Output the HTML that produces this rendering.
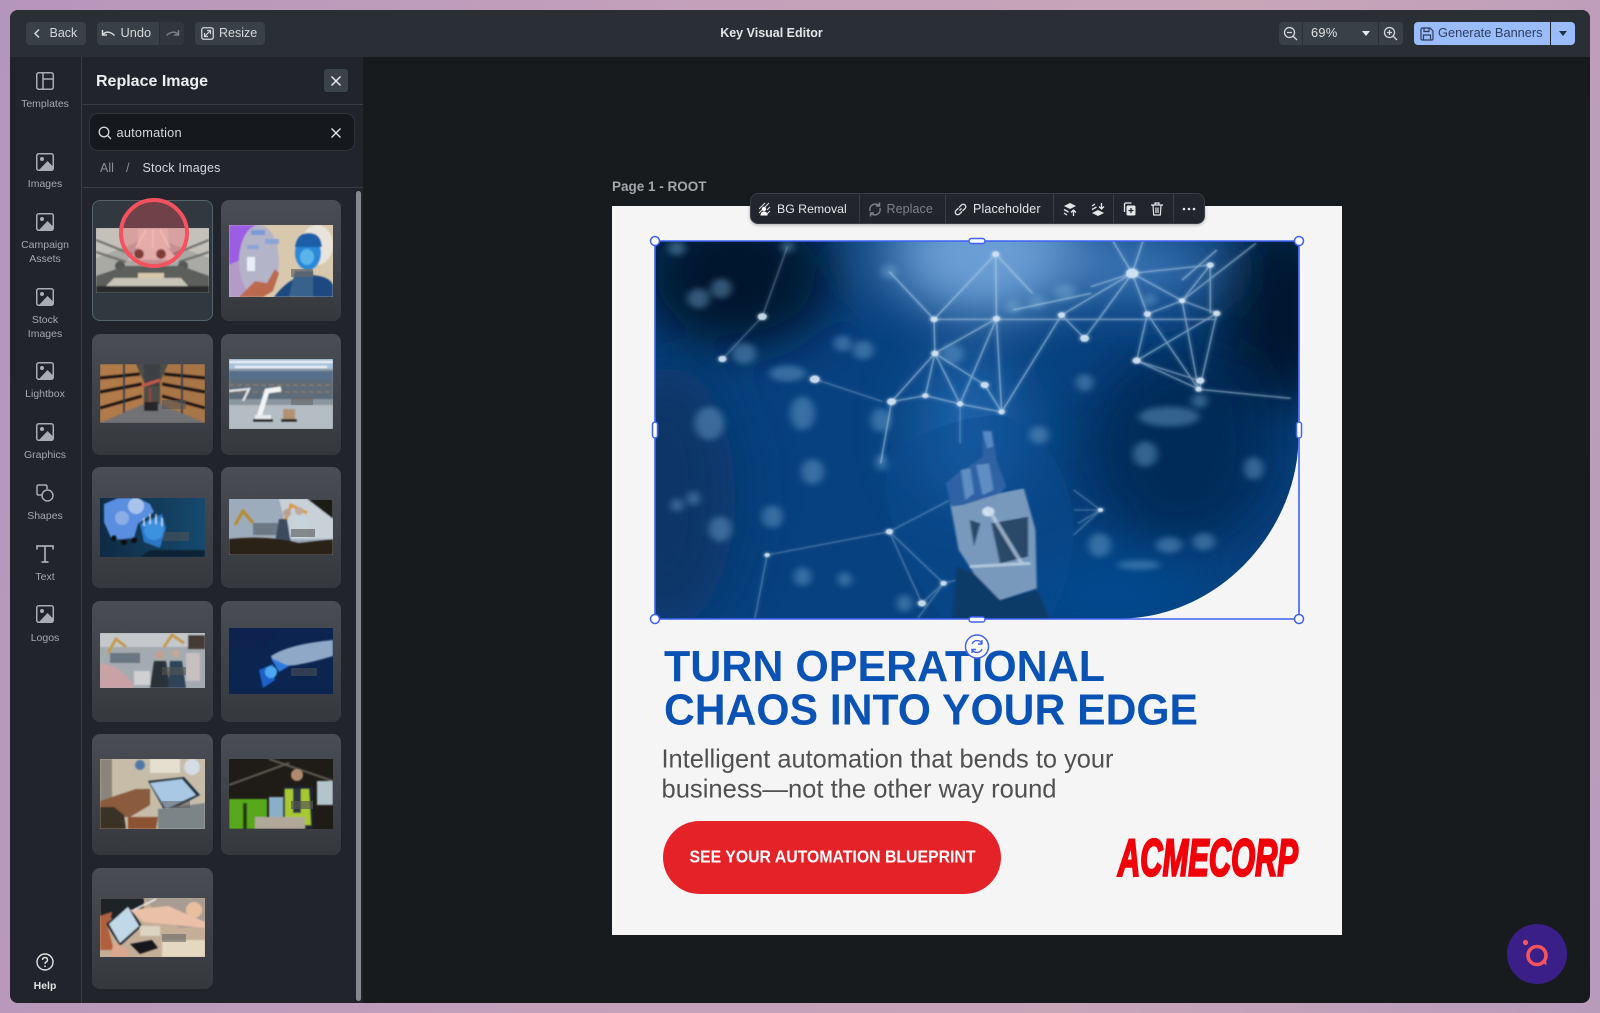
<!DOCTYPE html>
<html><head><meta charset="utf-8"><title>Key Visual Editor</title>
<style>
*{box-sizing:border-box}
html,body{margin:0;padding:0;width:1600px;height:1013px;overflow:hidden}
body{background:linear-gradient(100deg,#b596bb 0%,#c4a0bb 40%,#c9a5b8 70%,#b89bbb 100%);font-family:"Liberation Sans",sans-serif;position:relative}
.a{position:absolute}
.t{position:absolute;white-space:nowrap;line-height:1}
#win{position:absolute;left:10px;top:10px;width:1580px;height:993px;background:#171b1e;border-radius:8px;overflow:hidden}
.btn{position:absolute;top:22px;height:23px;background:#3a4047}
.lab{position:absolute;left:10px;width:70px;text-align:center;font-size:10.500px;color:#a5a9ae;line-height:14px}
.card{position:absolute;width:121px;height:121px;border-radius:8px;background:linear-gradient(#4a4d54,#35383d)}
.thumb{position:absolute;display:block}
.ic{position:absolute;display:block}
</style></head><body>
<svg width="0" height="0" style="position:absolute">
<defs>
<symbol id="img" viewBox="0 0 18 18"><rect x=".75" y=".75" width="16.500" height="16.500" rx="2" fill="none" stroke="#a9adb2" stroke-width="1.500"/><circle cx="6" cy="6" r="2" fill="#a9adb2"/><path d="M3 17 L11.500 8 L17 13.500 V17Z" fill="#a9adb2"/></symbol>
<filter id="b1"><feGaussianBlur stdDeviation=".7"/></filter>
<filter id="b3" filterUnits="userSpaceOnUse" x="-100" y="-100" width="1800" height="1400"><feGaussianBlur stdDeviation="2.500"/></filter>
<filter id="b6" filterUnits="userSpaceOnUse" x="-100" y="-100" width="1800" height="1400"><feGaussianBlur stdDeviation="9"/></filter>
<filter id="b60" filterUnits="userSpaceOnUse" x="-400" y="-400" width="2400" height="2000"><feGaussianBlur stdDeviation="70"/></filter>
<filter id="glow" filterUnits="userSpaceOnUse" x="-100" y="-100" width="1800" height="1400"><feGaussianBlur in="SourceGraphic" stdDeviation="5" result="g"/><feGaussianBlur in="SourceGraphic" stdDeviation="1.200" result="c"/><feMerge><feMergeNode in="g"/><feMergeNode in="c"/></feMerge></filter>
<clipPath id="shape"><path d="M35 32H1518V640C1510 900 1340 1166 1100 1166H35Z"/></clipPath>
</defs>
</svg>

<div id="win"></div>
<!-- top bar -->
<div class="a" style="left:10px;top:10px;width:1580px;height:47px;background:#2a2f35;border-radius:8px 8px 0 0"></div>
<!-- sidebar + panel -->
<div class="a" style="left:10px;top:57px;width:353px;height:946px;background:#21252b;border-radius:0 0 0 8px"></div>
<div class="a" style="left:81px;top:57px;width:1px;height:946px;background:#3a3e44"></div>

<div class="btn" style="left:25.500px;width:60px;border-radius:4px"></div>
<svg class="ic" style="left:31px;top:27px" width="12" height="13" viewBox="0 0 12 13"><path d="M8 2.500L4 6.500L8 10.500" fill="none" stroke="#d5d8db" stroke-width="1.500"/></svg>
<div class="t" style="left:49.500px;top:26.500px;font-size:12.500px;color:#d5d8db">Back</div>
<div class="btn" style="left:97px;width:62px;border-radius:4px 0 0 4px"></div>
<div class="btn" style="left:160px;width:24px;border-radius:0 4px 4px 0;background:#32373d"></div>
<svg class="ic" style="left:101px;top:27px" width="15" height="13" viewBox="0 0 15 13"><path d="M1.500 3V8H6M2 7.500C4.500 4.500 9 4 13.500 8.500" fill="none" stroke="#d5d8db" stroke-width="1.500"/></svg>
<div class="t" style="left:120.500px;top:26.500px;font-size:12.800px;color:#d5d8db">Undo</div>
<svg class="ic" style="left:165px;top:27px" width="15" height="13" viewBox="0 0 15 13"><path d="M13.500 3V8H9M13 7.500C10.500 4.500 6 4 1.500 8.500" fill="none" stroke="#7c8186" stroke-width="1.500"/></svg>
<div class="btn" style="left:195px;width:70px;border-radius:4px"></div>
<svg class="ic" style="left:201px;top:27px" width="13" height="13" viewBox="0 0 13 13"><rect x=".75" y=".75" width="11.500" height="11.500" rx="2" fill="none" stroke="#d5d8db" stroke-width="1.300"/><path d="M4 9L9 4M6 3.500H9.500V7M3.500 6V9.500H7" fill="none" stroke="#d5d8db" stroke-width="1.200"/></svg>
<div class="t" style="left:219px;top:26.500px;font-size:12.500px;color:#d5d8db">Resize</div>
<div class="t" style="left:671.500px;width:200px;text-align:center;top:27px;font-size:12.500px;font-weight:bold;color:#e4e6e8">Key Visual Editor</div>

<!-- zoom -->
<div class="btn" style="left:1279px;width:23px;border-radius:4px 0 0 4px"></div>
<div class="btn" style="left:1303px;width:75px"></div>
<div class="btn" style="left:1379px;width:24px;border-radius:0 4px 4px 0"></div>
<svg class="ic" style="left:1283px;top:26px" width="15" height="15" viewBox="0 0 15 15"><circle cx="6.500" cy="6.500" r="5" fill="none" stroke="#d5d8db" stroke-width="1.300"/><path d="M10 10L14 14M4 6.500H9" stroke="#d5d8db" stroke-width="1.300"/></svg>
<div class="t" style="left:1311px;top:26.500px;font-size:12.800px;color:#e0e2e4;letter-spacing:.3px">69%</div>
<svg class="ic" style="left:1361px;top:30px" width="10" height="7"><path d="M1 1H9L5 6Z" fill="#e8eaec"/></svg>
<svg class="ic" style="left:1383px;top:26px" width="15" height="15" viewBox="0 0 15 15"><circle cx="6.500" cy="6.500" r="5" fill="none" stroke="#d5d8db" stroke-width="1.300"/><path d="M10 10L14 14M4 6.500H9M6.500 4V9" stroke="#d5d8db" stroke-width="1.300"/></svg>
<!-- generate -->
<div class="btn" style="left:1414px;width:136px;border-radius:4px 0 0 4px;background:#9bbcfb"></div>
<div class="a" style="left:1550px;top:22px;width:1px;height:23px;background:#25282c"></div>
<div class="btn" style="left:1551px;width:24px;border-radius:0 4px 4px 0;background:#9bbcfb"></div>
<svg class="ic" style="left:1420px;top:27px" width="14" height="14" viewBox="0 0 14 14"><path d="M1 2.500Q1 1 2.500 1H10L13 4V11.500Q13 13 11.500 13H2.500Q1 13 1 11.500Z M4 1V4.500H9V1M3.500 13V8H10.500V13" fill="none" stroke="#2c3d5e" stroke-width="1.200"/></svg>
<div class="t" style="left:1438px;top:26.500px;font-size:12.800px;color:#2f4060">Generate Banners</div>
<svg class="ic" style="left:1558px;top:30px" width="10" height="7"><path d="M1 1H9L5 6Z" fill="#22304a"/></svg>

<!-- sidebar -->
<svg class="ic" style="left:36px;top:72px" width="18" height="18" viewBox="0 0 18 18"><rect x=".75" y=".75" width="16.500" height="16.500" rx="2" fill="none" stroke="#a9adb2" stroke-width="1.500"/><path d="M7 1V17M7 7H17" stroke="#a9adb2" stroke-width="1.500"/></svg>
<div class="lab" style="top:97px">Templates</div>
<svg class="ic" style="left:36px;top:152.500px" width="18" height="18"><use href="#img"/></svg>
<div class="lab" style="top:177px">Images</div>
<svg class="ic" style="left:36px;top:213px" width="18" height="18"><use href="#img"/></svg>
<div class="lab" style="top:237.500px">Campaign<br>Assets</div>
<svg class="ic" style="left:36px;top:288px" width="18" height="18"><use href="#img"/></svg>
<div class="lab" style="top:312.500px">Stock<br>Images</div>
<svg class="ic" style="left:36px;top:362px" width="18" height="18"><use href="#img"/></svg>
<div class="lab" style="top:387px">Lightbox</div>
<svg class="ic" style="left:36px;top:423px" width="18" height="18"><use href="#img"/></svg>
<div class="lab" style="top:448px">Graphics</div>
<svg class="ic" style="left:36px;top:484px" width="18" height="18" viewBox="0 0 18 18"><path d="M6 11H2.500Q1 11 1 9.500V2.500Q1 1 2.500 1H9.500Q11 1 11 2.500V5" fill="none" stroke="#a9adb2" stroke-width="1.500"/><circle cx="11.500" cy="11.500" r="5.500" fill="none" stroke="#a9adb2" stroke-width="1.500"/></svg>
<div class="lab" style="top:509px">Shapes</div>
<svg class="ic" style="left:36px;top:545px" width="18" height="18" viewBox="0 0 18 18"><path d="M1 4.500V1H17V4.500M9 1V17M5.500 17H12.500" fill="none" stroke="#a9adb2" stroke-width="1.700"/></svg>
<div class="lab" style="top:569.500px">Text</div>
<svg class="ic" style="left:36px;top:605px" width="18" height="18"><use href="#img"/></svg>
<div class="lab" style="top:630.500px">Logos</div>
<svg class="ic" style="left:36px;top:953px" width="18" height="18" viewBox="0 0 18 18"><circle cx="9" cy="9" r="8" fill="none" stroke="#e0e2e4" stroke-width="1.400"/><path d="M6.500 7Q6.500 4.500 9 4.500T11.500 7Q11.500 8.500 9.800 9.200Q9 9.600 9 11" fill="none" stroke="#e0e2e4" stroke-width="1.400"/><circle cx="9" cy="13.300" r=".9" fill="#e0e2e4"/></svg>
<div class="lab" style="top:979px;color:#e0e2e4;font-weight:bold">Help</div>

<!-- panel -->
<div class="t" style="left:96px;top:74px;font-size:16px;font-weight:bold;color:#eceef0">Replace Image</div>
<div class="a" style="left:324px;top:69px;width:24px;height:23px;border-radius:3px;background:#3b424a"></div>
<svg class="ic" style="left:330px;top:75px" width="12" height="12"><path d="M1.500 1.500L10.500 10.500M10.500 1.500L1.500 10.500" stroke="#e8eaec" stroke-width="1.500"/></svg>
<div class="a" style="left:82px;top:104px;width:281px;height:1px;background:#3a3e44"></div>
<div class="a" style="left:88.500px;top:113px;width:266.500px;height:38px;border-radius:9px;background:#15181c;border:1px solid #2f343a"></div>
<svg class="ic" style="left:98px;top:126px" width="14" height="14" viewBox="0 0 14 14"><circle cx="6" cy="6" r="4.800" fill="none" stroke="#d5d8db" stroke-width="1.300"/><path d="M9.500 9.500L13 13" stroke="#d5d8db" stroke-width="1.300"/></svg>
<div class="t" style="left:116.500px;top:126.500px;font-size:12.800px;color:#d5d8db;letter-spacing:.2px">automation</div>
<svg class="ic" style="left:330px;top:127px" width="12" height="12"><path d="M1.500 1.500L10.500 10.500M10.500 1.500L1.500 10.500" stroke="#e0e2e4" stroke-width="1.400"/></svg>
<div class="t" style="left:100px;top:162px;font-size:12.500px;color:#8b8f94">All</div>
<div class="t" style="left:126px;top:162px;font-size:12.500px;color:#8b8f94">/</div>
<div class="t" style="left:142.500px;top:162px;font-size:12.500px;color:#d5d8db;letter-spacing:.2px">Stock Images</div>
<div class="a" style="left:82px;top:187px;width:281px;height:1px;background:#3a3e44"></div>
<div class="a" style="left:356px;top:191px;width:5px;height:810px;border-radius:3px;background:#85888c"></div>

<!-- cards -->
<div class="card" style="left:92px;top:200px;background:#323840;border:1.500px solid #56626c"></div>
<div class="card" style="left:221px;top:200px;width:120px"></div>
<div class="card" style="left:92px;top:334px"></div><div class="card" style="left:221px;top:334px;width:120px"></div>
<div class="card" style="left:92px;top:467px"></div><div class="card" style="left:221px;top:467px;width:120px"></div>
<div class="card" style="left:92px;top:601px"></div><div class="card" style="left:221px;top:601px;width:120px"></div>
<div class="card" style="left:92px;top:734px"></div><div class="card" style="left:221px;top:734px;width:120px"></div>
<div class="card" style="left:92px;top:868px"></div>

<!-- r1c1 -->
<svg class="thumb" style="left:96px;top:228px" width="113" height="65" viewBox="0 0 113 65">
<rect width="113" height="65" fill="#a9a9a5"/>
<g filter="url(#b1)"><path d="M0 0H113V30L70 14H42L0 30Z" fill="#c4c1bb"/>
<path d="M0 12L40 28M113 12L73 28M0 24L30 34M113 24L83 34" stroke="#75756f" stroke-width="2.500"/>
<circle cx="24" cy="38" r="5" fill="#555856"/><circle cx="87" cy="38" r="5" fill="#555856"/>
<path d="M0 48L30 38H85L113 48V65H0Z" fill="#5d5e5b"/>
<path d="M18 50H85L92 58H10Z" fill="#c7c3b6"/><rect x="42" y="45" width="26" height="5" fill="#d6c8a8"/>
<rect x="0" y="58" width="113" height="7" fill="#2a2b2a"/>
<path d="M42 0H72V20L82 32H32L42 20Z" fill="#d8cfc7"/>
<path d="M50 2L40 20M64 2L74 20M57 2V20" stroke="#f0e6de" stroke-width="1.500"/>
<ellipse cx="43" cy="26" rx="5" ry="5" fill="#4a3028"/><ellipse cx="65" cy="26" rx="5" ry="5" fill="#4a3028"/></g>
</svg>
<!-- r1c2 -->
<svg class="thumb" style="left:229px;top:225px" width="104" height="72" viewBox="0 0 104 72">
<rect width="104" height="72" fill="#d8c8ae"/>
<g filter="url(#b1)"><path d="M0 0H28L14 34L0 40Z" fill="#9c5ce4"/><path d="M0 40L14 34L18 72H0Z" fill="#b49ac8"/><ellipse cx="30" cy="36" rx="20" ry="36" fill="#b4b4c8"/>
<ellipse cx="88" cy="20" rx="16" ry="20" fill="#e8e4dc"/>
<path d="M45 72Q60 52 78 50Q100 50 104 60V72Z" fill="#1f4a80"/><path d="M60 72L66 46H84V72Z" fill="#38628c"/>
<ellipse cx="79" cy="28" rx="13" ry="17" fill="#2a88d8"/><path d="M66 22Q68 8 80 8Q92 8 93 22Z" fill="#1b5ea8"/><ellipse cx="78" cy="32" rx="7" ry="8" fill="#5ab4ea"/>
<rect x="22" y="5" width="14" height="5" fill="#7a9ad8"/><rect x="36" y="14" width="14" height="5" fill="#8aa4d8"/><rect x="18" y="20" width="12" height="4" fill="#8aa4d8"/>
<path d="M10 72L26 56L38 58L46 44L50 48L44 66L34 72Z" fill="#bc6a50"/><path d="M18 32h8v14h-8z" fill="#e8ecf4"/></g>
<rect x="62" y="44" width="22" height="8" fill="#666" opacity=".7"/>
</svg>
<!-- r2c1 -->
<svg class="thumb" style="left:100px;top:364px" width="105" height="59" viewBox="0 0 105 59">
<rect width="105" height="59" fill="#4c4c4a"/>
<g filter="url(#b1)"><path d="M0 0H36L44 18V40L0 59Z" fill="#b07a48"/><path d="M105 0H68L60 18V40L105 59Z" fill="#a87446"/>
<path d="M0 14L40 10M0 28L42 20M0 44L42 32M105 14L64 10M105 28L62 20M105 44L62 32" stroke="#1c1612" stroke-width="3.500"/><path d="M24 0V50M82 0V50" stroke="#22384e" stroke-width="2"/>
<path d="M0 59L44 40H60L105 59Z" fill="#6f7274"/><rect x="44" y="0" width="16" height="22" fill="#3e4044"/>
<rect x="44" y="38" width="14" height="9" fill="#25282a"/><path d="M42 22L60 16" stroke="#c8584a" stroke-width="3"/><path d="M50 38V24" stroke="#8a4a40" stroke-width="3"/></g>
<rect x="62" y="36" width="24" height="9" fill="#555" opacity=".6"/>
</svg>
<!-- r2c2 -->
<svg class="thumb" style="left:229px;top:359px" width="104" height="70" viewBox="0 0 104 70">
<rect width="104" height="70" fill="#8a96a0"/>
<g filter="url(#b1)"><rect width="104" height="10" fill="#a8c4dc"/><path d="M0 3H104M6 8H98" stroke="#f0f4f8" stroke-width="2"/>
<rect y="12" width="104" height="8" fill="#56708c"/><rect y="20" width="104" height="20" fill="#5c6c7a"/>
<path d="M0 26H104M0 33H104" stroke="#8c7a62" stroke-width="1.500" stroke-dasharray="5 3"/>
<rect y="46" width="104" height="24" fill="#b4bcc4"/>
<path d="M30 58L38 32L52 30" fill="none" stroke="#f2f4f6" stroke-width="5"/><rect x="26" y="56" width="16" height="5" fill="#e8eaec"/><rect x="24" y="60" width="20" height="3" fill="#222"/>
<path d="M0 32L20 30L14 42" stroke="#e8eaec" stroke-width="2" fill="none"/>
<rect x="54" y="50" width="12" height="10" fill="#b09270"/><rect x="52" y="60" width="16" height="3" fill="#222"/></g>
<rect x="62" y="38" width="22" height="8" fill="#666" opacity=".6"/>
</svg>
<!-- r3c1 -->
<svg class="thumb" style="left:100px;top:498px" width="105" height="59" viewBox="0 0 105 59">
<defs><linearGradient id="g5" x1="0" x2="1"><stop offset="0" stop-color="#0f2a44"/><stop offset="1" stop-color="#164a6e"/></linearGradient></defs>
<rect width="105" height="59" fill="url(#g5)"/>
<g filter="url(#b1)"><path d="M4 6L18 0H38L50 6L54 14L38 26L34 40L12 42L4 24Z" fill="#5a8ee0"/><circle cx="36" cy="8" r="8" fill="#a8c4ec"/><circle cx="22" cy="20" r="7" fill="#8aaee4"/>
<circle cx="14" cy="40" r="3" fill="#111"/><circle cx="24" cy="44" r="3" fill="#111"/><circle cx="34" cy="42" r="3" fill="#111"/>
<path d="M40 26L62 16L66 30L60 50L44 44Z" fill="#2a78c8"/><circle cx="54" cy="32" r="10" fill="#3c92e0"/><path d="M44 20V28M50 16V26M56 16V26M62 20V28" stroke="#d0e8fa" stroke-width="1.300"/><path d="M0 59H40L50 52H105V59Z" fill="#0b2036"/></g>
<rect x="63" y="34" width="26" height="9" fill="#555" opacity=".5"/>
</svg>
<!-- r3c2 -->
<svg class="thumb" style="left:229px;top:499px" width="104" height="56" viewBox="0 0 104 56">
<rect width="104" height="56" fill="#9cacbc"/>
<g filter="url(#b1)"><path d="M78 0H104V20Z" fill="#1e1a16"/><path d="M50 0H78L104 20V40H60Z" fill="#c8d0d8"/>
<path d="M56 22L62 6L78 14" fill="none" stroke="#d89a38" stroke-width="3"/><path d="M6 26L14 12L24 24" fill="none" stroke="#b8892f" stroke-width="3"/>
<rect x="24" y="24" width="30" height="12" fill="#6c7884"/>
<path d="M46 44L50 20H58L62 44Z" fill="#3c4c5e"/><circle cx="58" cy="14" r="4" fill="#b8a090"/><path d="M62 40L66 18H78L80 40Z" fill="#c8d4dc"/><circle cx="70" cy="12" r="4" fill="#c0a898"/>
<path d="M0 40Q40 36 70 44L104 40V56H0Z" fill="#2c2018"/></g>
<rect x="62" y="30" width="24" height="8" fill="#555" opacity=".6"/>
</svg>
<!-- r4c1 -->
<svg class="thumb" style="left:100px;top:633px" width="105" height="55" viewBox="0 0 105 55">
<rect width="105" height="55" fill="#a3abb0"/>
<g filter="url(#b1)"><rect x="0" y="0" width="105" height="14" fill="#c4c8ca"/><path d="M8 20L16 6L26 14M64 14L72 2L84 10" fill="none" stroke="#c49a44" stroke-width="3"/>
<rect x="88" y="2" width="17" height="14" fill="#443a34"/><rect x="86" y="20" width="14" height="28" fill="#c8bfc0"/>
<path d="M50 55L54 28H66L70 55Z" fill="#2a3038"/><circle cx="60" cy="22" r="4.500" fill="#c0a090"/><path d="M68 55L70 28H82L86 55Z" fill="#2e4258"/><circle cx="76" cy="20" r="4" fill="#c4a898"/>
<path d="M0 30Q26 34 34 55H0Z" fill="#c9a2a6"/><rect x="34" y="38" width="16" height="14" fill="#d0d0d2"/><path d="M10 20H40V30H10Z" fill="#6a7682"/></g>
<rect x="62" y="34" width="24" height="8" fill="#555" opacity=".6"/>
</svg>
<!-- r4c2 -->
<svg class="thumb" style="left:229px;top:628px" width="104" height="66" viewBox="0 0 104 66">
<rect width="104" height="66" fill="#0b2450"/>
<g filter="url(#b1)"><path d="M42 28Q60 16 104 12V28Q84 34 72 36Q56 40 44 34Z" fill="#8fa8c8"/><path d="M42 30L60 38L50 44Z" fill="#2a7ae0"/><path d="M30 42L44 36L46 52L34 60Z" fill="#1b62c8"/><circle cx="42" cy="44" r="6" fill="#4ea8f0"/><path d="M0 0H50L30 20H0Z" fill="#082050"/></g>
<rect x="62" y="40" width="26" height="8" fill="#555" opacity=".5"/>
</svg>
<!-- r5c1 -->
<svg class="thumb" style="left:100px;top:759px" width="105" height="70" viewBox="0 0 105 70">
<rect width="105" height="70" fill="#c6bca8"/>
<g filter="url(#b1)"><rect x="0" y="0" width="12" height="50" fill="#8a857a"/><circle cx="40" cy="6" r="5" fill="#5078a8"/><rect x="50" y="0" width="30" height="14" fill="#e6dfd0"/><circle cx="92" cy="8" r="8" fill="#d4dce4"/>
<path d="M0 42L36 30H50L50 46L30 58H0Z" fill="#8a5c3c"/><path d="M0 48H14L24 56L26 70H0Z" fill="#3a3028"/><path d="M28 58H58L56 70H28Z" fill="#8c5230"/>
<path d="M48 22L84 18L100 36L66 54Z" fill="#1e2a38"/><path d="M50 24L82 20L96 36L66 50Z" fill="#a8c8e4"/><path d="M58 50L105 44V70H58Z" fill="#7c8488"/></g>
<rect x="62" y="42" width="28" height="7" fill="#555" opacity=".5"/>
</svg>
<!-- r5c2 -->
<svg class="thumb" style="left:229px;top:759px" width="104" height="70" viewBox="0 0 104 70">
<rect width="104" height="70" fill="#1f1c18"/>
<g filter="url(#b1)"><path d="M0 26L60 4M40 0L104 22" stroke="#5c5a50" stroke-width="2"/><rect x="88" y="22" width="16" height="24" fill="#b4c4cc"/><rect x="40" y="38" width="18" height="20" fill="#8ab0c8"/>
<rect x="0" y="40" width="38" height="30" fill="#58a81c"/><rect x="14" y="44" width="4" height="26" fill="#233a10"/>
<path d="M54 70L54 28L84 28L84 70Z" fill="#1e2630"/><path d="M56 30H80L82 66H56Z" fill="#a8c830"/><path d="M64 30H72V54H64Z" fill="#2a3440"/><circle cx="68" cy="16" r="6" fill="#b08a6c"/>
<rect x="26" y="58" width="50" height="12" fill="#b0a898"/></g>
<rect x="62" y="42" width="22" height="8" fill="#555" opacity=".7"/>
</svg>
<!-- r6c1 -->
<svg class="thumb" style="left:100px;top:898px" width="105" height="59" viewBox="0 0 105 59">
<rect width="105" height="59" fill="#c4ae98"/>
<g filter="url(#b1)"><path d="M0 0H44V10L0 24Z" fill="#1e2226"/><path d="M44 0H105V28L80 30L56 14Z" fill="#a89c92"/><circle cx="94" cy="12" r="8" fill="#e8c0a0"/>
<path d="M0 18L12 14L8 30L14 52H0Z" fill="#b0603c"/>
<path d="M6 26L28 6L42 28L20 48Z" fill="#1e2226"/><path d="M9 26L28 9L39 28L20 45Z" fill="#c0d8e8"/>
<path d="M30 12L68 8L105 24V30L44 24Z" fill="#eac0a8"/><path d="M34 12L56 1" stroke="#f0f0f0" stroke-width="1.500"/>
<path d="M10 59L14 44L26 50L28 59Z" fill="#d8a890"/><path d="M30 46L52 42L58 50L40 56Z" fill="#14161a"/><rect x="62" y="42" width="43" height="17" fill="#e4d8c0"/><rect x="40" y="28" width="20" height="10" fill="#dcd4c0"/></g>
<rect x="62" y="36" width="24" height="8" fill="#666" opacity=".6"/>
</svg>
<!-- red pointer -->
<svg class="ic" style="left:114px;top:193px" width="80" height="80"><circle cx="40" cy="40" r="33" fill="#ff5a62" fill-opacity=".3" stroke="#f4525e" stroke-width="4"/></svg>

<!-- canvas -->
<div class="t" style="left:612px;top:180px;font-size:13.500px;font-weight:bold;color:#a4a8ac">Page 1 - ROOT</div>
<div class="a" style="left:612px;top:206px;width:730px;height:729px;background:#f5f5f5"></div>

<!-- main image -->
<svg class="a" style="left:640px;top:230px" width="680" height="400" viewBox="0 0 1568 1200" preserveAspectRatio="none">
<g clip-path="url(#shape)">
<rect width="1568" height="1200" fill="#07417f"/>
<g filter="url(#b60)">
<ellipse cx="220" cy="130" rx="230" ry="230" fill="#00152e"/>
<ellipse cx="60" cy="800" rx="160" ry="400" fill="#0b3566"/>
<ellipse cx="1480" cy="240" rx="150" ry="300" fill="#00142e"/>
<ellipse cx="1250" cy="650" rx="220" ry="300" fill="#032a58"/>
<ellipse cx="800" cy="70" rx="230" ry="190" fill="#6a9ed4"/>
<ellipse cx="1130" cy="110" rx="190" ry="100" fill="#3a74b4"/>
<ellipse cx="760" cy="600" rx="120" ry="240" fill="#1a62a8"/>
<ellipse cx="1080" cy="1090" rx="220" ry="110" fill="#02488e"/>
</g>
<path d="M835 555C930 600 1000 740 1000 900C1000 1020 970 1100 945 1166H700C600 1000 560 850 570 720C590 640 700 560 835 555Z" fill="#0a4b90" opacity=".45"/>
<!-- bokeh -->
<g filter="url(#b6)" fill="#7cb0d8" opacity=".42">
<ellipse cx="135" cy="205" rx="26" ry="30"/><ellipse cx="187" cy="175" rx="24" ry="30"/><ellipse cx="340" cy="50" rx="16" ry="18"/><ellipse cx="85" cy="55" rx="20" ry="22"/>
<ellipse cx="240" cy="370" rx="28" ry="32"/><ellipse cx="340" cy="430" rx="42" ry="24"/><ellipse cx="467" cy="340" rx="20" ry="24"/><ellipse cx="515" cy="360" rx="24" ry="28"/><ellipse cx="720" cy="372" rx="26" ry="30"/><ellipse cx="575" cy="125" rx="18" ry="22"/>
<ellipse cx="398" cy="725" rx="26" ry="38"/><ellipse cx="557" cy="697" rx="14" ry="24"/><ellipse cx="305" cy="860" rx="24" ry="34"/><ellipse cx="185" cy="897" rx="26" ry="38"/><ellipse cx="375" cy="1040" rx="20" ry="28"/><ellipse cx="472" cy="1048" rx="16" ry="22"/><ellipse cx="85" cy="825" rx="14" ry="20"/><ellipse cx="123" cy="805" rx="14" ry="22"/>
<ellipse cx="1025" cy="458" rx="20" ry="26"/><ellipse cx="1290" cy="512" rx="18" ry="22"/><ellipse cx="1165" cy="672" rx="28" ry="38"/><ellipse cx="1415" cy="715" rx="22" ry="34"/><ellipse cx="1060" cy="945" rx="26" ry="36"/><ellipse cx="1300" cy="935" rx="26" ry="26"/><ellipse cx="1220" cy="945" rx="30" ry="24"/><ellipse cx="1150" cy="1005" rx="50" ry="14"/><ellipse cx="920" cy="615" rx="22" ry="26"/><ellipse cx="610" cy="1120" rx="18" ry="26"/><ellipse cx="980" cy="185" rx="24" ry="24"/><ellipse cx="915" cy="215" rx="18" ry="20"/><ellipse cx="860" cy="230" rx="18" ry="22"/><ellipse cx="1175" cy="210" rx="14" ry="20"/><ellipse cx="1220" cy="560" rx="70" ry="30"/><ellipse cx="375" cy="550" rx="28" ry="50"/><ellipse cx="160" cy="580" rx="34" ry="50"/><ellipse cx="555" cy="570" rx="22" ry="36"/>
</g>
<!-- lines -->
<g filter="url(#glow)" stroke="#b8d4ec" stroke-width="3" fill="none" opacity=".62">
<path d="M820 72L678 268M820 72L822 266M820 72L905 190M678 268H822H972H1170H1330M678 268L680 370M680 370L822 266M822 266L834 546M822 266L738 522M680 370L658 497M680 370L738 522M680 370L795 465M680 370L580 515M580 515L658 497L738 522L834 546M795 465L834 546M972 255L834 546M972 255L1025 325M1025 325L1135 130M972 255L1135 130M1170 252L1145 392M1145 392L1290 452M1145 392L1290 478M1250 212L1288 478M1330 250L1290 478M1315 105L1250 212M1315 105L1135 130M1135 130L1170 252M1135 130L1250 212M1250 212L1170 252M1250 212L1330 250M1315 105L1315 250M1170 252L1288 478M1145 392L1330 250M1135 130L1160 32M1135 130L1090 32M1420 40L1250 212M1250 150L1330 60M1290 478L1500 505M575 125L678 268M580 515L555 700M1040 170L1135 130M860 240L1040 190"/>
</g>
<g filter="url(#glow)" stroke="#a8c8e6" stroke-width="2.600" fill="none" opacity=".42">
<path d="M404 448L560 515M282 260L190 387M282 260L340 50M1062 840L1000 780M1062 840L1000 840M1062 840L1000 915M1062 840L1010 880"/>
<path d="M293 975L575 905M293 975L265 1166M575 905L700 1060M575 905L650 1120M575 905L715 810M700 1060L790 1030M650 1120L700 1060M700 1060L640 1166M738 522V640"/>
</g>
<!-- nodes -->
<g fill="#d8e8f6" filter="url(#glow)" opacity=".9">
<circle cx="820" cy="72" r="8"/><circle cx="678" cy="268" r="8"/><circle cx="822" cy="266" r="8"/><circle cx="972" cy="255" r="8"/><circle cx="1135" cy="130" r="14"/><circle cx="1315" cy="105" r="8"/><circle cx="1170" cy="252" r="8"/><circle cx="1250" cy="212" r="7"/><circle cx="1330" cy="250" r="8"/><circle cx="1025" cy="325" r="10"/><circle cx="1145" cy="392" r="9"/><circle cx="680" cy="370" r="8"/><circle cx="795" cy="465" r="9"/><circle cx="580" cy="515" r="10"/><circle cx="658" cy="497" r="7"/><circle cx="738" cy="522" r="7"/><circle cx="834" cy="546" r="7"/><circle cx="1292" cy="452" r="9"/><circle cx="1288" cy="478" r="7"/><circle cx="190" cy="387" r="9"/><circle cx="282" cy="260" r="10"/><circle cx="403" cy="448" r="11"/><circle cx="1062" cy="840" r="6"/><circle cx="575" cy="905" r="8"/><circle cx="293" cy="975" r="6"/><circle cx="700" cy="1060" r="7"/><circle cx="650" cy="1120" r="9"/><circle cx="843" cy="1150" r="7"/>
</g>
<!-- hand -->
<g filter="url(#b3)">
<path d="M720 1166L730 1010L770 1030L830 1110L915 1080L945 1166Z" fill="#0e3a68"/>
<path d="M715 820L885 775L895 820L912 900L915 1075L830 1110L770 1030L735 960Z" fill="#7899bc"/>
<path d="M790 600L812 600L822 690L845 770L830 790L745 825L718 830L705 760L740 720L770 700L790 680Z" fill="#2f62a4"/>
<path d="M740 720L762 715L770 790L750 810Z M775 705L805 700L815 780L790 795Z" fill="#5f8ec2"/>
<path d="M790 605L810 605L815 650L800 655Z" fill="#5688c4"/>
<circle cx="803" cy="845" r="14" fill="#d0e2f0"/>
<path d="M760 870L785 880L770 950Z M810 880L895 860L895 980L830 1000Z" fill="#1c3a5a" opacity=".85"/>
<path d="M760 1010L900 1000M800 830L880 1000" stroke="#c4d8ea" stroke-width="9" fill="none" opacity=".7"/>
</g>
</g>
</svg>

<!-- artboard text -->
<svg class="a" style="left:0;top:0" width="1600" height="1013" viewBox="0 0 1600 1013">
<g font-family="'Liberation Sans',sans-serif">
<text x="664" y="681" font-size="44" font-weight="bold" fill="#0a53b5" textLength="441" lengthAdjust="spacingAndGlyphs">TURN OPERATIONAL</text>
<text x="664" y="724.500" font-size="44" font-weight="bold" fill="#0a53b5" textLength="534" lengthAdjust="spacingAndGlyphs">CHAOS INTO YOUR EDGE</text>
<text x="661.500" y="767.500" font-size="26" fill="#505050" textLength="452" lengthAdjust="spacingAndGlyphs">Intelligent automation that bends to your</text>
<text x="661.500" y="797.500" font-size="26" fill="#505050" textLength="395" lengthAdjust="spacingAndGlyphs">business—not the other way round</text>
<rect x="663" y="821" width="338" height="73" rx="36.500" fill="#e52228"/>
<text x="689.500" y="862.500" font-size="17.500" font-weight="bold" fill="#ffffff" textLength="286" lengthAdjust="spacingAndGlyphs">SEE YOUR AUTOMATION BLUEPRINT</text>
<text x="1118" y="875.500" font-size="52" font-weight="bold" font-style="italic" fill="#f00008" stroke="#f00008" stroke-width="2.400" textLength="180" lengthAdjust="spacingAndGlyphs">ACMECORP</text>
</g>
<!-- selection -->
<g fill="none" stroke="#3f62f5">
<path d="M655 241H1299V619H655Z" stroke-width="1.600"/>
<g fill="#fff" stroke-width="1.500">
<circle cx="655" cy="241" r="4.500"/><circle cx="1299" cy="241" r="4.500"/><circle cx="655" cy="619" r="4.500"/><circle cx="1299" cy="619" r="4.500"/>
<rect x="969" y="238.500" width="16" height="5" rx="2.500"/><rect x="969" y="617" width="16" height="5" rx="2.500"/>
<rect x="652.500" y="422" width="5" height="16" rx="2.500"/><rect x="1296.500" y="422" width="5" height="16" rx="2.500"/>
<circle cx="977" cy="646.500" r="11.500"/>
</g>
<path d="M972 644A5.500 5.500 0 0 1 982 643.500M982 649A5.500 5.500 0 0 1 972 649.500M982 640V644H978M972 653V649.500H976" stroke-width="1.400"/>
</g>
</svg>

<!-- floating toolbar -->
<div class="a" style="left:750px;top:193px;width:455px;height:31px;border-radius:8px;background:#22262c;border:1px solid #3a3e44;box-shadow:0 1px 3px rgba(0,0,0,.3)"></div>
<div class="a" style="left:858.500px;top:194px;width:1px;height:29px;background:#3a3e44"></div>
<div class="a" style="left:944.500px;top:194px;width:1px;height:29px;background:#3a3e44"></div>
<div class="a" style="left:1053px;top:194px;width:1px;height:29px;background:#3a3e44"></div>
<div class="a" style="left:1113px;top:194px;width:1px;height:29px;background:#3a3e44"></div>
<div class="a" style="left:1173px;top:194px;width:1px;height:29px;background:#3a3e44"></div>
<svg class="ic" style="left:758px;top:202px" width="13" height="14" viewBox="0 0 13 14"><path d="M1 7L7 1M1 11L11 1M8 13L12 9M12 5L9 8" stroke="#dfe1e3" fill="none"/><circle cx="6" cy="7" r="2.200" fill="#fff"/><path d="M2.500 13.500Q2.500 9.500 6 9.500T9.500 13.500Z" fill="#fff"/></svg>
<div class="t" style="left:777px;top:203px;font-size:12.300px;color:#e4e6e8">BG Removal</div>
<svg class="ic" style="left:868px;top:202px" width="14" height="15" viewBox="0 0 14 15"><path d="M2 9A5.500 5.500 0 0 1 11 3.500M12 6A5.500 5.500 0 0 1 3 11.500M11.500 0.500V4H8M2.500 14.500V11H6" fill="none" stroke="#7e8286" stroke-width="1.500"/></svg>
<div class="t" style="left:886.500px;top:203px;font-size:12.500px;color:#7e8286;letter-spacing:.08px">Replace</div>
<svg class="ic" style="left:954px;top:203px" width="13" height="13" viewBox="0 0 13 13"><path d="M5.500 7.500L7.500 5.500M4.500 5L2 7.500A2.400 2.400 0 0 0 5.500 11L8 8.500M5 4.500L7.500 2A2.400 2.400 0 0 1 11 5.500L8.500 8" fill="none" stroke="#dfe1e3" stroke-width="1.300"/></svg>
<div class="t" style="left:973px;top:203px;font-size:12.500px;color:#e4e6e8;letter-spacing:.15px">Placeholder</div>
<svg class="ic" style="left:1063px;top:202px" width="14" height="15" viewBox="0 0 14 15"><path d="M1 4L7 1L13 4L7 7Z" fill="#e4e6e8"/><path d="M1 7.500L5.500 10M1 11L4 13" stroke="#e4e6e8" stroke-width="1.300"/><path d="M10.500 14V8M8 10.500L10.500 8L13 10.500" fill="none" stroke="#e4e6e8" stroke-width="1.300"/></svg>
<svg class="ic" style="left:1091px;top:202px" width="14" height="15" viewBox="0 0 14 15"><path d="M1 11L7 14L13 11L7 8Z" fill="#e4e6e8"/><path d="M1 7.500L5.500 5M1 4L4 2" stroke="#e4e6e8" stroke-width="1.300"/><path d="M10.500 1V7M8 4.500L10.500 7L13 4.500" fill="none" stroke="#e4e6e8" stroke-width="1.300"/></svg>
<svg class="ic" style="left:1122px;top:202px" width="14" height="14" viewBox="0 0 14 14"><path d="M2.500 10V2.500Q2.500 1 4 1H9.500" fill="none" stroke="#e4e6e8" stroke-width="1.300"/><rect x="4.500" y="3.500" width="9" height="10" rx="1.500" fill="#e4e6e8"/><path d="M9 6V11M6.500 8.500H11.500" stroke="#22262c" stroke-width="1.300"/></svg>
<svg class="ic" style="left:1151px;top:202px" width="12" height="14" viewBox="0 0 12 14"><path d="M0 3H12M4 3V1H8V3M2 3L2.700 13H9.300L10 3M5 5.500V11M7 5.500V11" fill="none" stroke="#e4e6e8" stroke-width="1.200"/></svg>
<svg class="ic" style="left:1182px;top:207px" width="14" height="4"><circle cx="2" cy="2" r="1.300" fill="#e4e6e8"/><circle cx="7" cy="2" r="1.300" fill="#e4e6e8"/><circle cx="12" cy="2" r="1.300" fill="#e4e6e8"/></svg>

<!-- help bubble -->
<svg class="ic" style="left:1507px;top:924px" width="60" height="60"><circle cx="30" cy="30" r="30" fill="#3b1f88"/><circle cx="18.500" cy="18.500" r="2.600" fill="#f5545c"/><circle cx="30" cy="31.500" r="9" fill="none" stroke="#f5545c" stroke-width="3.600"/><path d="M35 38L39.500 41.500L39 35Z" fill="#f5545c"/></svg>
</body></html>
